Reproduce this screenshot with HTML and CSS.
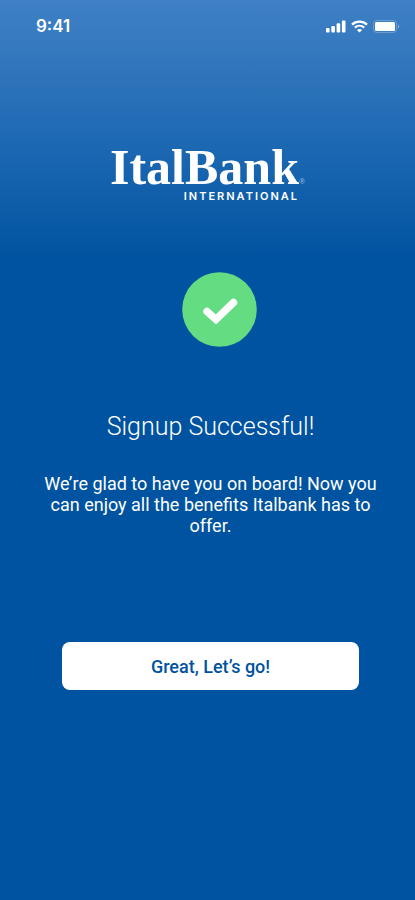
FILE: index.html
```html
<!DOCTYPE html>
<html lang="en">
<head>
    <meta charset="UTF-8">
    <meta name="viewport" content="width=device-width, initial-scale=1.0">
    <title>ItalBank International</title>
    <link rel="stylesheet" href="styles.css">
</head>
<body>
    <header class="status-bar">
        <span class="time">9:41</span>
        <div class="status-icons">
            <svg width="20" height="13" viewBox="0 0 20 13" fill="#fff" aria-hidden="true">
                <rect x="0" y="8" width="3.6" height="4.5" rx="1"/>
                <rect x="5.3" y="6" width="3.6" height="6.5" rx="1"/>
                <rect x="10.6" y="3.3" width="3.6" height="9.2" rx="1"/>
                <rect x="15.9" y="0.5" width="3.6" height="12" rx="1"/>
            </svg>
            <svg width="17" height="13" viewBox="0 0 17 13" fill="none" stroke="#fff" stroke-width="2.2" aria-hidden="true">
                <path d="M1 4.6C5.2 0.6 11.8 0.6 16 4.6"/>
                <path d="M3.8 7.6C6.5 5.1 10.5 5.1 13.2 7.6"/>
                <path d="M8.5 12.6L5.9 9.9C7.4 8.6 9.6 8.6 11.1 9.9Z" fill="#fff" stroke="none"/>
            </svg>
            <svg width="27" height="13" viewBox="0 0 27 13" aria-hidden="true">
                <rect x="0.5" y="0.5" width="23" height="12" rx="3.5" fill="none" stroke="#fff" stroke-opacity="0.25"/>
                <rect x="2" y="2" width="20" height="9" rx="1.5" fill="#fff"/>
                <path d="M25 4.5C26.6 5.2 26.6 7.8 25 8.5Z" fill="#fff" fill-opacity="0.4"/>
            </svg>
        </div>
    </header>
    <main class="content">
        <div class="logo">
            <div class="logo-name">ItalBank<span class="logo-mark">®</span></div>
            <div class="logo-sub">INTERNATIONAL</div>
        </div>
        <svg class="check" width="75" height="75" viewBox="0 0 75 75" aria-hidden="true">
            <circle cx="37.5" cy="37.5" r="37.3" fill="#64dc82"/>
            <path d="M25 39.5L34 47.5L51.5 30.5" fill="none" stroke="#fff" stroke-width="7.4" stroke-linecap="round"/>
        </svg>
        <h1>Signup Successful!</h1>
        <p>We’re glad to have you on board! Now you can enjoy all the benefits Italbank has to offer.</p>
        <button type="button">Great, Let’s go!</button>
    </main>
</body>
</html>
```

FILE: styles.css
```css
* {
    box-sizing: border-box;
}

body {
    margin: 0;
    min-height: 100vh;
    font-family: Roboto, sans-serif;
    color: #fff;
    background: #0053a0 linear-gradient(#3f80c6 0, #3277bd 60px, #1c67b2 150px, #0053a0 260px) no-repeat;
}

.status-bar {
    display: flex;
    justify-content: space-between;
    align-items: center;
    height: 52px;
    padding: 0 15px 0 36px;
}

.time {
    font-family: Inter, sans-serif;
    font-size: 17px;
    font-weight: 600;
}

.status-icons {
    display: flex;
    align-items: center;
    gap: 5px;
}

.content {
    display: flex;
    flex-direction: column;
    align-items: center;
    padding: 92px 35px 40px 41px;
    text-align: center;
}

.logo {
    padding-right: 12px;
}

.logo-name {
    position: relative;
    font-family: "Liberation Serif", serif;
    font-size: 50px;
    font-weight: bold;
    line-height: 46px;
}

.logo-mark {
    position: absolute;
    left: 100%;
    bottom: 4px;
    font-size: 8px;
    font-weight: normal;
    line-height: 8px;
    opacity: 0.6;
}

.logo-sub {
    font-family: Inter, sans-serif;
    font-size: 11px;
    font-weight: 600;
    line-height: 12px;
    letter-spacing: 2px;
    text-align: right;
}

.check {
    margin: 70px 0 0 17px;
}

h1 {
    margin: 64px 0 0;
    font-size: 25px;
    font-weight: 300;
    line-height: 32px;
}

p {
    margin: 30px 0 0;
    font-size: 18px;
    line-height: 21px;
}

button {
    width: 100%;
    max-width: 297px;
    height: 48px;
    margin-top: 106px;
    border: none;
    border-radius: 8px;
    background: #fff;
    color: #0053a0;
    font-family: inherit;
    font-size: 18px;
    font-weight: 500;
    cursor: pointer;
}
```
